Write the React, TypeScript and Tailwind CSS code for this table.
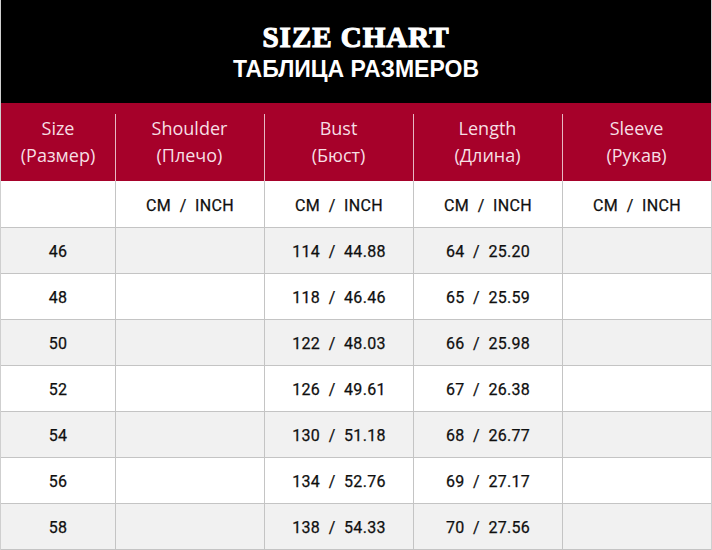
const columns = [
  { en: "Size", ru: "(Размер)" },
  { en: "Shoulder", ru: "(Плечо)" },
  { en: "Bust", ru: "(Бюст)" },
  { en: "Length", ru: "(Длина)" },
  { en: "Sleeve", ru: "(Рукав)" },
];

const rows = [
  { size: "46", bust: "114  /  44.88", length: "64  /  25.20" },
  { size: "48", bust: "118  /  46.46", length: "65  /  25.59" },
  { size: "50", bust: "122  /  48.03", length: "66  /  25.98" },
  { size: "52", bust: "126  /  49.61", length: "67  /  26.38" },
  { size: "54", bust: "130  /  51.18", length: "68  /  26.77" },
  { size: "56", bust: "134  /  52.76", length: "69  /  27.17" },
  { size: "58", bust: "138  /  54.33", length: "70  /  27.56" },
];

const grid = "grid grid-cols-[114px_149px_149px_149px_1fr]";
const cell =
  "flex items-center justify-center pt-[3px] border-l border-[#c4c4c4] first:border-l-0 whitespace-pre";

export default function App() {
  return (
    <div className="w-[712px] h-[550px] overflow-hidden bg-white border-x border-[#cfcfcf] font-['Roboto',sans-serif] text-[16px] font-normal text-[#0f0f0f] tracking-[0.3px] [-webkit-text-stroke:0.25px_#0f0f0f]">
      <div className="h-[103px] bg-black flex flex-col items-center justify-center text-white">
        <div className="font-['Liberation_Serif',serif] font-black text-[29px] leading-[30px] tracking-[1px] mt-[2px] [-webkit-text-stroke:1.2px_white]">
          SIZE CHART
        </div>
        <div className="font-['Liberation_Sans',sans-serif] font-bold text-[23px] leading-[30px] tracking-[0px] mt-[2px] [-webkit-text-stroke:0px_white]">
          ТАБЛИЦА РАЗМЕРОВ
        </div>
      </div>

      <div className={`${grid} h-[78px] bg-[#a6012a] text-[#f6dfe4] font-['Open_Sans',sans-serif] font-normal text-[18px] leading-[27px] tracking-normal [-webkit-text-stroke:0px_white]`}>
        {columns.map((c, i) => (
          <div key={c.en} className="relative flex flex-col items-center justify-center">
            {i > 0 && (
              <span className="absolute left-0 top-[11px] bottom-0 w-px bg-[#e7b8c3]" />
            )}
            <span>{c.en}</span>
            <span>{c.ru}</span>
          </div>
        ))}
      </div>

      <div className={`${grid} h-[47px] border-b border-[#c4c4c4]`}>
        <div className={cell}></div>
        <div className={cell}>CM  /  INCH</div>
        <div className={cell}>CM  /  INCH</div>
        <div className={cell}>CM  /  INCH</div>
        <div className={cell}>CM  /  INCH</div>
      </div>

      {rows.map((r, i) => (
        <div
          key={r.size}
          className={`${grid} h-[46px] border-b border-[#c4c4c4] ${i % 2 === 0 ? "bg-[#f1f1f1]" : "bg-white"}`}
        >
          <div className={cell}>{r.size}</div>
          <div className={cell}></div>
          <div className={cell}>{r.bust}</div>
          <div className={cell}>{r.length}</div>
          <div className={cell}></div>
        </div>
      ))}
    </div>
  );
}
